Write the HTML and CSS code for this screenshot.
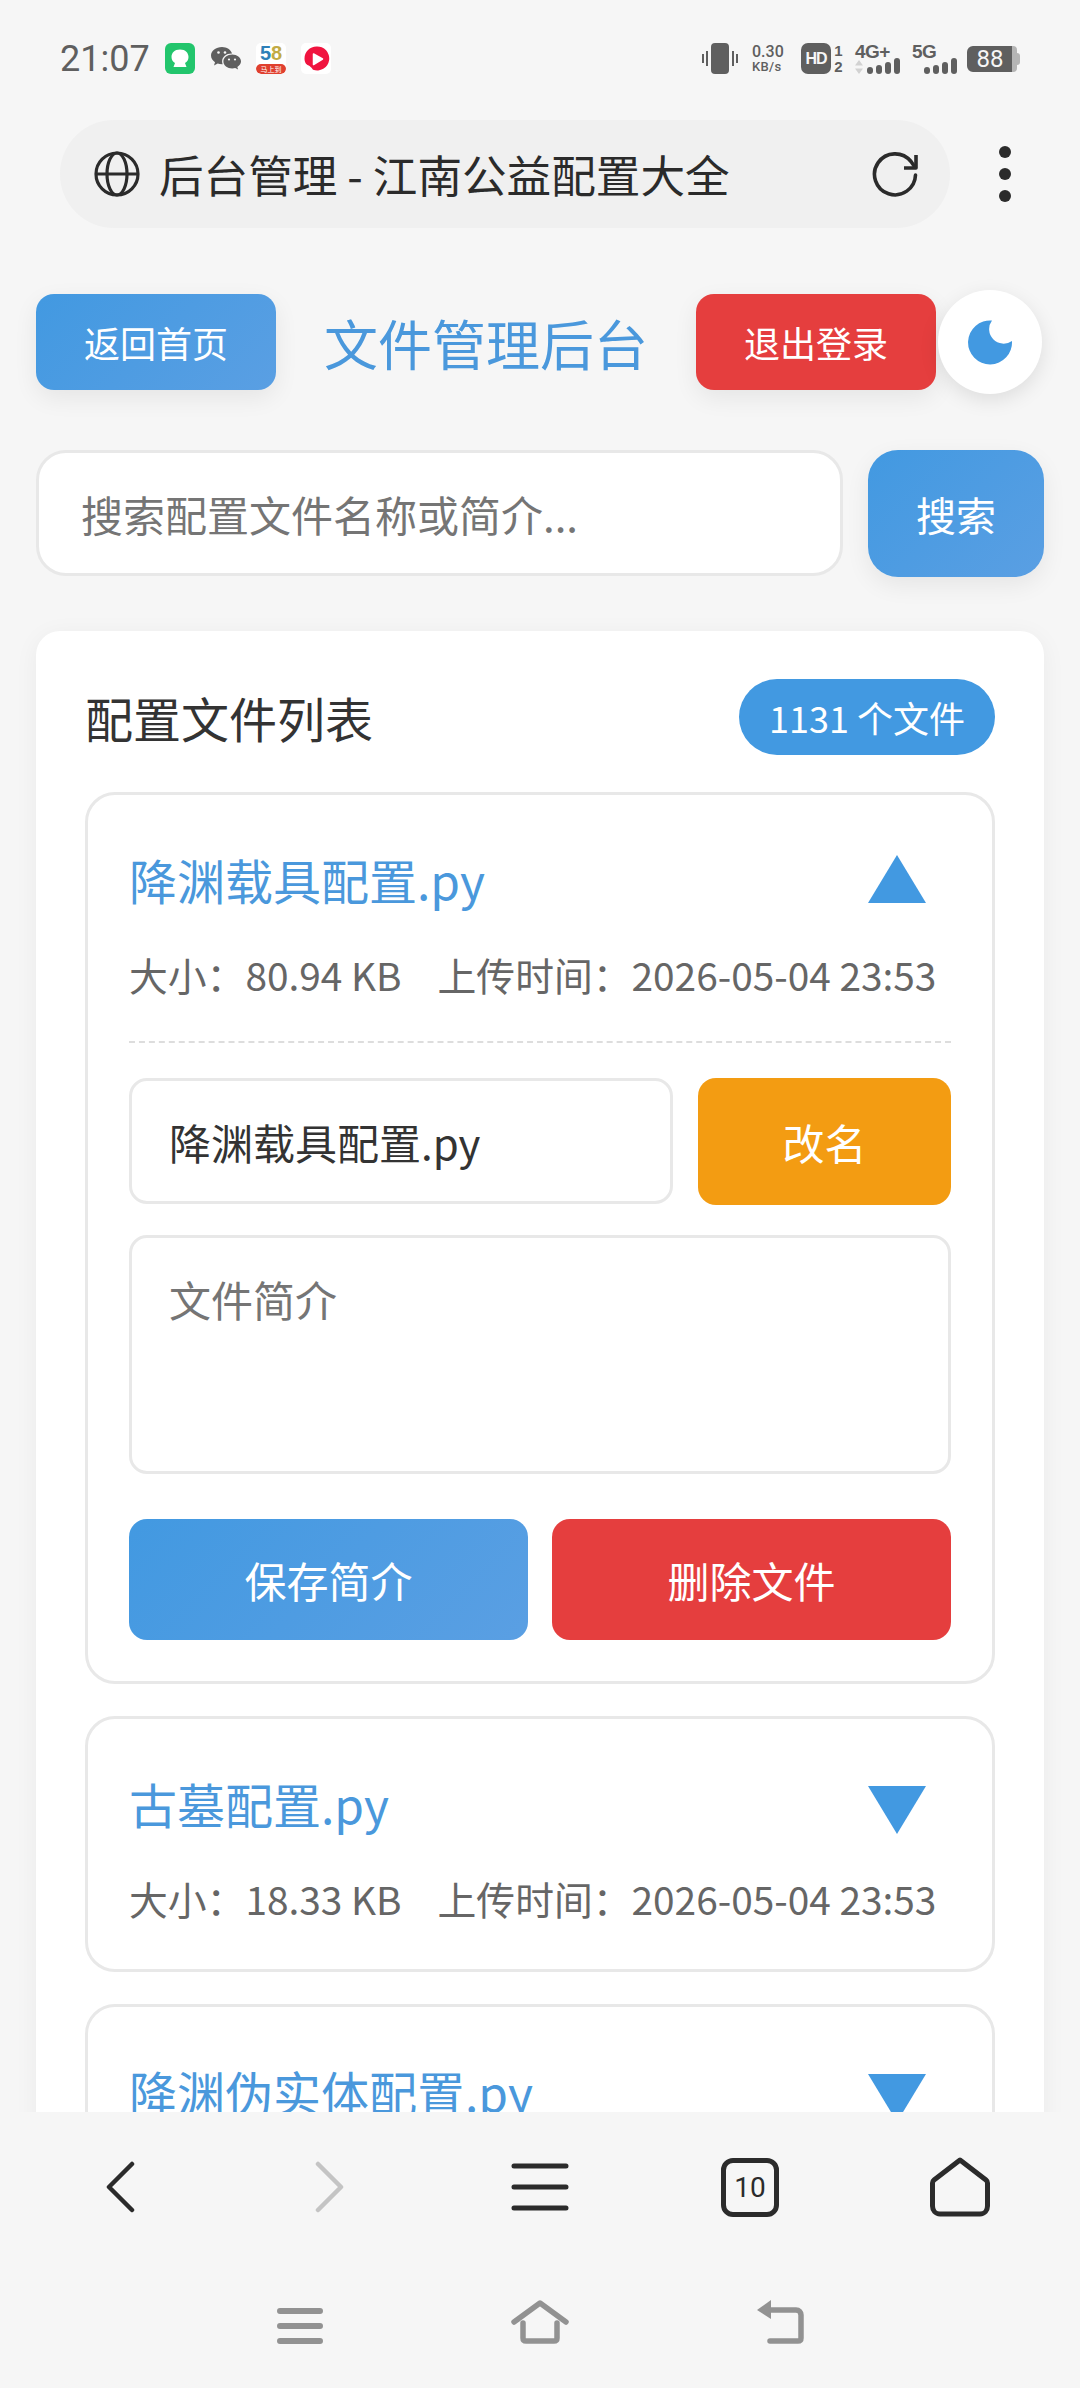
FILE: index.html
```html
<!DOCTYPE html>
<html lang="zh-CN">
<head>
  <meta charset="UTF-8">
  <meta name="viewport" content="width=device-width, initial-scale=1.0">
  <title>后台管理 - 江南公益配置大全</title>
  <link rel="stylesheet" href="styles.css">
</head>
<body>

<div class="phone">

  <!-- Status bar -->
  <div class="status-bar">
    <div class="status-left">
      <span class="clock">21:07</span>
      <svg class="app-icon" viewBox="0 0 30 31"><rect width="30" height="31" rx="6" fill="#22c56c"/><path d="M15 6.500c5.500 0 8.500 3.500 8.500 7.500 0 3-1.500 5-3.500 6l1.500 4h-13l1.500-4c-2-1-3.500-3-3.500-6 0-4 3-7.500 8.500-7.500z" fill="#fff"/></svg>
      <svg class="app-icon wechat" viewBox="0 0 30 26"><path d="M11 1C5 1 0 4.800 0 9.600c0 2.700 1.600 5 4 6.600L3 19.500l3.700-2c1.200.4 2.700.7 4.300.7h.7c-.4-1-.6-1.800-.6-2.800 0-4.400 4.200-7.800 9.400-7.800h.6C19.900 3.800 15.800 1 11 1z" fill="#5f5f5f"/><path d="M30 15.400c0-3.900-4-7-8.800-7s-8.800 3.100-8.800 7 4 7 8.800 7c1.100 0 2.100-.2 3-.5l2.900 1.600-.8-2.600c2.200-1.400 3.700-3.300 3.700-5.500z" fill="#5f5f5f"/><circle cx="7.500" cy="6.500" r="1.300" fill="#f6f6f6"/><circle cx="14" cy="6.500" r="1.300" fill="#f6f6f6"/><circle cx="18" cy="13.500" r="1.100" fill="#f6f6f6"/><circle cx="24" cy="13.500" r="1.100" fill="#f6f6f6"/></svg>
      <span class="app-58"><span class="num-58"><i class="n5">5</i><i class="n8">8</i></span><span class="tag-58">马上到</span></span>
      <span class="app-tile">
        <svg viewBox="0 0 30 31"><path d="M15.500 3.500a12 12 0 1 1-3.500 23.200c-1.500-1.900-2-3.200-5.500-4.700C4 20.500 3.500 17.500 3.500 15.500c0-6.600 5.400-12 12-12z" fill="#f0143f"/><path d="M12.500 11l9 5-9 5.500z" fill="#fff" stroke="#fff" stroke-width="1.500" stroke-linejoin="round"/></svg>
      </span>
    </div>
    <div class="status-right">
      <svg class="vibrate" viewBox="0 0 36 31"><rect x="9" y="0" width="18" height="31" rx="4" fill="#5f5f5f"/><path d="M5 8v15M1 11v9M31 8v15M35 11v9" stroke="#5f5f5f" stroke-width="2"/></svg>
      <span class="speed"><b>0.30</b><b class="unit">KB/s</b></span>
      <span class="hd">HD</span>
      <span class="sim"><b>1</b><b>2</b></span>
      <span class="signal signal-4g">
        <b>4G+</b>
        <svg class="updown" viewBox="0 0 8 14"><path d="M4 0l4 5.500H0zM4 14l4-5.500H0z" fill="#d2d2d2"/></svg>
        <span class="bars"><i class="b1"></i><i class="b2"></i><i class="b3"></i><i class="b4"></i></span>
      </span>
      <span class="signal signal-5g">
        <b>5G</b>
        <span class="bars"><i class="b1"></i><i class="b2"></i><i class="b3"></i><i class="b4"></i></span>
      </span>
      <span class="battery"><span class="battery-body">88</span><span class="battery-cap"></span></span>
    </div>
  </div>

  <!-- Browser address row -->
  <div class="address-row">
    <div class="address-bar">
      <svg class="globe" viewBox="0 0 46 46" fill="none" stroke="#2b2b2b" stroke-width="3.200"><circle cx="23" cy="23" r="21"/><path d="M2 23h42"/><ellipse cx="23" cy="23" rx="10" ry="21"/></svg>
      <span class="address-text">后台管理 - 江南公益配置大全</span>
      <svg class="reload" viewBox="0 0 46 46" fill="none" stroke="#2b2b2b" stroke-width="3.600" stroke-linecap="round" stroke-linejoin="round"><path d="M43.500 24A20.500 20.500 0 1 1 39 10.500l3.500 5"/><path d="M44 4v13H32" stroke-linecap="butt"/></svg>
    </div>
    <div class="more-dots"><i></i><i></i><i></i></div>
  </div>

  <!-- Web content -->
  <div class="content">
    <div class="topbar">
      <a class="btn btn-blue btn-top">返回首页</a>
      <h1 class="page-title">文件管理后台</h1>
      <a class="btn btn-red btn-top">退出登录</a>
      <div class="theme-toggle">
        <svg viewBox="0 0 46 46"><path d="M25 1.500A22 22 0 1 0 45 22 14.500 14.500 0 0 1 25 1.500z" fill="#4299e1"/></svg>
      </div>
    </div>

    <div class="search-row">
      <input class="search-input" type="text" placeholder="搜索配置文件名称或简介...">
      <a class="btn btn-blue btn-search">搜索</a>
    </div>

    <div class="panel">
      <div class="panel-head">
        <h2 class="panel-title">配置文件列表</h2>
        <span class="count-badge">1131 个文件</span>
      </div>

      <div class="file-item open">
        <div class="file-title-row">
          <span class="file-name">降渊载具配置.py</span>
          <svg class="arrow" viewBox="0 0 58 48"><path d="M29 0l29 48H0z" fill="#4299e1"/></svg>
        </div>
        <div class="file-meta"><span>大小：80.94 KB</span><span>上传时间：2026-05-04 23:53</span></div>
        <div class="file-edit">
          <div class="rename-row">
            <input class="field rename-input" type="text" value="降渊载具配置.py">
            <a class="btn btn-orange btn-rename">改名</a>
          </div>
          <textarea class="field desc-input" placeholder="文件简介"></textarea>
          <div class="action-row">
            <a class="btn btn-blue btn-action">保存简介</a>
            <a class="btn btn-red btn-action">删除文件</a>
          </div>
        </div>
      </div>

      <div class="file-item">
        <div class="file-title-row">
          <span class="file-name">古墓配置.py</span>
          <svg class="arrow arrow-down" viewBox="0 0 58 48"><path d="M29 48L58 0H0z" fill="#4299e1"/></svg>
        </div>
        <div class="file-meta"><span>大小：18.33 KB</span><span>上传时间：2026-05-04 23:53</span></div>
      </div>

      <div class="file-item">
        <div class="file-title-row">
          <span class="file-name">降渊伪实体配置.py</span>
          <svg class="arrow arrow-down" viewBox="0 0 58 48"><path d="M29 48L58 0H0z" fill="#4299e1"/></svg>
        </div>
      </div>
    </div>
  </div>

  <!-- Browser toolbar -->
  <div class="toolbar">
    <div class="tool"><svg width="30" height="52" viewBox="0 0 30 52" fill="none" stroke="#2b2b2b" stroke-width="4.500" stroke-linecap="round" stroke-linejoin="round"><path d="M27 3L4 26l23 23"/></svg></div>
    <div class="tool"><svg width="30" height="52" viewBox="0 0 30 52" fill="none" stroke="#c4c4c4" stroke-width="4.500" stroke-linecap="round" stroke-linejoin="round"><path d="M3 3l23 23L3 49"/></svg></div>
    <div class="tool"><svg width="58" height="48" viewBox="0 0 58 48" stroke="#2b2b2b" stroke-width="5" stroke-linecap="round"><path d="M3 3h52M3 24h52M3 45h52"/></svg></div>
    <div class="tool"><span class="tab-count">10</span></div>
    <div class="tool"><svg width="60" height="60" viewBox="0 0 60 60" fill="none" stroke="#2b2b2b" stroke-width="5" stroke-linejoin="round"><path d="M30 3L4 23c-1 .8-1.500 1.500-1.500 3v23c0 4.500 3 8 7.500 8h40c4.500 0 7.500-3.500 7.500-8V26c0-1.500-.5-2.200-1.500-3z"/></svg></div>
  </div>

  <!-- System nav -->
  <div class="sys-nav">
    <div class="sys-key"><svg width="46" height="36" viewBox="0 0 46 36" stroke="#929292" stroke-width="6" stroke-linecap="round"><path d="M3 3h40M3 18h40M3 33h40"/></svg></div>
    <div class="sys-key"><svg width="58" height="44" viewBox="0 0 58 44" fill="none" stroke="#929292" stroke-width="5.500" stroke-linecap="round" stroke-linejoin="round"><path d="M3 22L29 3l26 19"/><path d="M12 23v15c0 2 1 3 3 3h28c2 0 3-1 3-3V23"/></svg></div>
    <div class="sys-key"><svg width="48" height="44" viewBox="0 0 48 44" fill="none"><path d="M14 10h26c3 0 5 2 5 5v23c0 2-1 3-3 3H14" stroke="#929292" stroke-width="5.500" stroke-linecap="round"/><path d="M15 0v19L1 10z" fill="#929292"/></svg></div>
  </div>

</div>

</body>
</html>
```

FILE: styles.css
```css
* {
  box-sizing: border-box;
}

body {
  margin: 0;
  background-color: #f6f6f6;
  font-family: "Noto Sans CJK SC", "Noto Sans", sans-serif;
  color: #333;
}

.phone {
  width: 1080px;
  height: 2388px;
  display: flex;
  flex-direction: column;
  overflow: hidden;
}

/* Status bar */
.status-bar {
  height: 120px;
  flex: none;
  display: flex;
  justify-content: space-between;
  align-items: center;
  padding: 0 60px 3px 60px;
  color: #5f5f5f;
}

.status-left,
.status-right {
  display: flex;
  align-items: center;
}

.clock {
  font-family: Roboto, sans-serif;
  font-size: 36px;
  width: 105px;
}

.app-icon {
  width: 30px;
  height: 31px;
  margin-right: 15px;
}

.app-icon.wechat {
  height: 26px;
  margin-left: 1px;
}

.app-58 {
  width: 30px;
  height: 31px;
  margin-right: 15px;
  background: #fff;
  border-radius: 5px;
  display: flex;
  flex-direction: column;
  align-items: center;
  justify-content: space-between;
  overflow: hidden;
}

.num-58 {
  font-family: "Liberation Sans", sans-serif;
  font-size: 20px;
  line-height: 21px;
  font-weight: bold;
}

.num-58 i {
  font-style: normal;
}

.n5 {
  color: #2d7fb8;
}

.n8 {
  color: #c2ab45;
}

.tag-58 {
  width: 100%;
  height: 10px;
  background: #e0402f;
  color: #fff;
  font-size: 7px;
  line-height: 10px;
  text-align: center;
  border-radius: 5px;
}

.app-tile {
  width: 30px;
  height: 31px;
  background: #fff;
  border-radius: 5px;
}

.app-tile svg {
  display: block;
  width: 30px;
  height: 31px;
}

.vibrate {
  width: 36px;
  height: 31px;
  margin-right: 14px;
  flex: none;
}

.speed {
  display: flex;
  flex-direction: column;
  width: 36px;
  flex: none;
  margin-right: 13px;
  font-family: Roboto, sans-serif;
  white-space: nowrap;
}

.speed b {
  font-weight: 500;
  font-size: 16px;
  line-height: 17px;
}

.speed .unit {
  font-size: 13px;
  line-height: 14px;
  letter-spacing: 0.3px;
}

.hd {
  width: 30px;
  height: 31px;
  flex: none;
  background: #5f5f5f;
  color: #f6f6f6;
  border-radius: 7px;
  font-family: "Liberation Sans", sans-serif;
  font-weight: bold;
  font-size: 16px;
  line-height: 31px;
  text-align: center;
  letter-spacing: -1px;
}

.sim {
  width: 11px;
  flex: none;
  margin-left: 2px;
  margin-right: 11px;
  display: flex;
  flex-direction: column;
  font-family: "Liberation Sans", sans-serif;
  font-size: 15px;
  line-height: 16px;
  text-align: center;
}

.signal {
  position: relative;
  display: flex;
  flex-direction: column;
  justify-content: space-between;
  height: 30px;
  flex: none;
  font-family: "Liberation Sans", sans-serif;
  font-size: 19px;
  line-height: 15px;
}

.signal b {
  letter-spacing: -0.5px;
  white-space: nowrap;
}

.signal-4g {
  width: 45px;
  margin-right: 12px;
}

.signal-5g {
  width: 45px;
  margin-right: 10px;
}

.updown {
  position: absolute;
  left: 0;
  bottom: 0;
  width: 8px;
  height: 14px;
}

.bars {
  display: flex;
  justify-content: flex-end;
  align-items: flex-end;
  gap: 3px;
  margin-top: -6px;
}

.bars i {
  width: 6px;
  background: #5f5f5f;
  border-radius: 3px;
}

.bars .b1 {
  height: 7px;
}

.bars .b2 {
  height: 9px;
}

.bars .b3 {
  height: 12px;
}

.bars .b4 {
  height: 16px;
}

.battery {
  display: flex;
  align-items: center;
  flex: none;
}

.battery-body {
  width: 50px;
  height: 26px;
  border-radius: 6px 4px 4px 6px;
  background: linear-gradient(90deg, #5f5f5f 90%, #b5b5b5 90%);
  color: #f6f6f6;
  font-family: Roboto, sans-serif;
  font-size: 24px;
  line-height: 26px;
  text-align: center;
  padding-right: 4px;
}

.battery-cap {
  width: 3px;
  height: 12px;
  background: #b5b5b5;
  border-radius: 0 3px 3px 0;
}

/* Address row */
.address-row {
  flex: none;
  height: 108px;
  padding-left: 60px;
  display: flex;
  align-items: center;
}

.address-bar {
  width: 890px;
  height: 108px;
  border-radius: 54px;
  background: #f0f0f0;
  display: flex;
  align-items: center;
  padding: 0 32px 0 34px;
}

.globe {
  width: 46px;
  height: 46px;
  flex: none;
}

.address-text {
  flex: 1;
  margin-left: 19px;
  font-size: 44.600px;
  color: #2b2b2b;
  white-space: nowrap;
  position: relative;
  top: -1px;
}

.reload {
  width: 46px;
  height: 46px;
  flex: none;
}

.more-dots {
  margin-left: 49px;
  width: 12px;
  display: flex;
  flex-direction: column;
  gap: 10px;
}

.more-dots i {
  width: 12px;
  height: 12px;
  border-radius: 50%;
  background: #2b2b2b;
}

/* Page content */
.content {
  flex: 1;
  min-height: 0;
  overflow: hidden;
  padding: 62px 36px 0;
}

.topbar {
  height: 104px;
  display: flex;
  align-items: center;
  margin-bottom: 56px;
  padding-right: 2px;
}

.btn {
  display: flex;
  justify-content: center;
  align-items: center;
  color: #fff;
  font-size: 42px;
  flex: none;
}

.btn-blue {
  background: linear-gradient(135deg, #4299e1, #5a9fe3);
}

.btn-red {
  background: #e53e3e;
}

.btn-orange {
  background: #f39c12;
}

.btn-top,
.btn-search {
  box-shadow: 0 8px 24px rgba(0, 0, 0, 0.07);
}

.btn-top {
  width: 240px;
  height: 96px;
  border-radius: 18px;
  font-size: 36px;
}

.page-title {
  flex: 1;
  margin: 0;
  text-align: center;
  color: #4a98dc;
  font-size: 54px;
  font-weight: 400;
}

.theme-toggle {
  width: 104px;
  height: 104px;
  flex: none;
  margin-left: 2px;
  border-radius: 50%;
  background: #fff;
  box-shadow: 0 6px 20px rgba(0, 0, 0, 0.1);
  display: flex;
  justify-content: center;
  align-items: center;
}

.theme-toggle svg {
  width: 46px;
  height: 46px;
}

.search-row {
  display: flex;
  gap: 25px;
  margin-bottom: 54px;
}

.search-input {
  flex: 1;
  min-width: 0;
  height: 126px;
  padding: 0 42px;
  border: 3px solid #e8e8e8;
  border-radius: 30px;
  background: #fff;
  font-family: inherit;
  font-size: 42px;
  color: #333;
}

input::placeholder,
textarea::placeholder {
  color: #757575;
  opacity: 1;
}

.btn-search {
  width: 176px;
  height: 127px;
  border-radius: 30px;
  font-size: 40px;
}

.panel {
  background: #fff;
  border-radius: 24px;
  padding: 48px 49px;
  box-shadow: 0 4px 24px rgba(0, 0, 0, 0.05);
}

.panel-head {
  display: flex;
  justify-content: space-between;
  align-items: center;
  height: 76px;
  margin-bottom: 37px;
}

.panel-title {
  margin: 0;
  font-size: 48px;
  font-weight: 400;
  color: #333;
}

.count-badge {
  width: 256px;
  height: 76px;
  border-radius: 38px;
  background: #4299e1;
  color: #fff;
  font-size: 36px;
  display: flex;
  justify-content: center;
  align-items: center;
}

.file-item {
  border: 3px solid #e8e8e8;
  border-radius: 30px;
  padding: 38px 41px 47px;
  margin-bottom: 32px;
}

.file-item.open {
  padding-bottom: 41px;
}

.file-title-row {
  height: 92px;
  display: flex;
  justify-content: space-between;
  align-items: center;
  padding-right: 25px;
}

.file-name {
  color: #4a98dc;
  font-size: 48px;
}

.arrow {
  width: 58px;
  height: 48px;
}

.arrow-down {
  margin-top: 14px;
}

.file-meta {
  display: flex;
  gap: 36px;
  margin-top: 25px;
  height: 48px;
  align-items: center;
  font-size: 38.800px;
  color: #666;
  white-space: nowrap;
}

.file-edit {
  margin-top: 43px;
  padding-top: 35px;
  border-top: 2px dashed #ddd;
}

.rename-row {
  display: flex;
  gap: 25px;
  margin-bottom: 30px;
}

.field {
  display: block;
  border: 3px solid #e8e8e8;
  border-radius: 18px;
  background: #fff;
  font-family: inherit;
  font-size: 42px;
  color: #333;
  padding: 0 37px;
}

.rename-input {
  flex: 1;
  min-width: 0;
  height: 126px;
}

.btn-rename {
  width: 253px;
  height: 127px;
  border-radius: 18px;
}

.desc-input {
  width: 100%;
  height: 239px;
  padding-top: 30px;
  resize: none;
  margin-bottom: 45px;
}

.action-row {
  display: flex;
  gap: 24px;
}

.btn-action {
  flex: 1;
  height: 121px;
  border-radius: 18px;
}

/* Browser toolbar */
.toolbar {
  flex: none;
  height: 150px;
  padding: 0 15px;
  background: #f6f6f6;
  display: flex;
  align-items: center;
}

.tool {
  flex: 1;
  display: flex;
  justify-content: center;
  align-items: center;
}

.tab-count {
  width: 58px;
  height: 59px;
  border: 5px solid #2b2b2b;
  border-radius: 12px;
  font-family: Roboto, sans-serif;
  font-size: 28px;
  color: #2b2b2b;
  display: flex;
  justify-content: center;
  align-items: center;
}

.sys-nav {
  flex: none;
  height: 126px;
  padding: 0 180px;
  background: #f6f6f6;
  display: flex;
  align-items: flex-start;
}

.sys-key {
  flex: 1;
  height: 82px;
  display: flex;
  justify-content: center;
  align-items: flex-end;
}
```
